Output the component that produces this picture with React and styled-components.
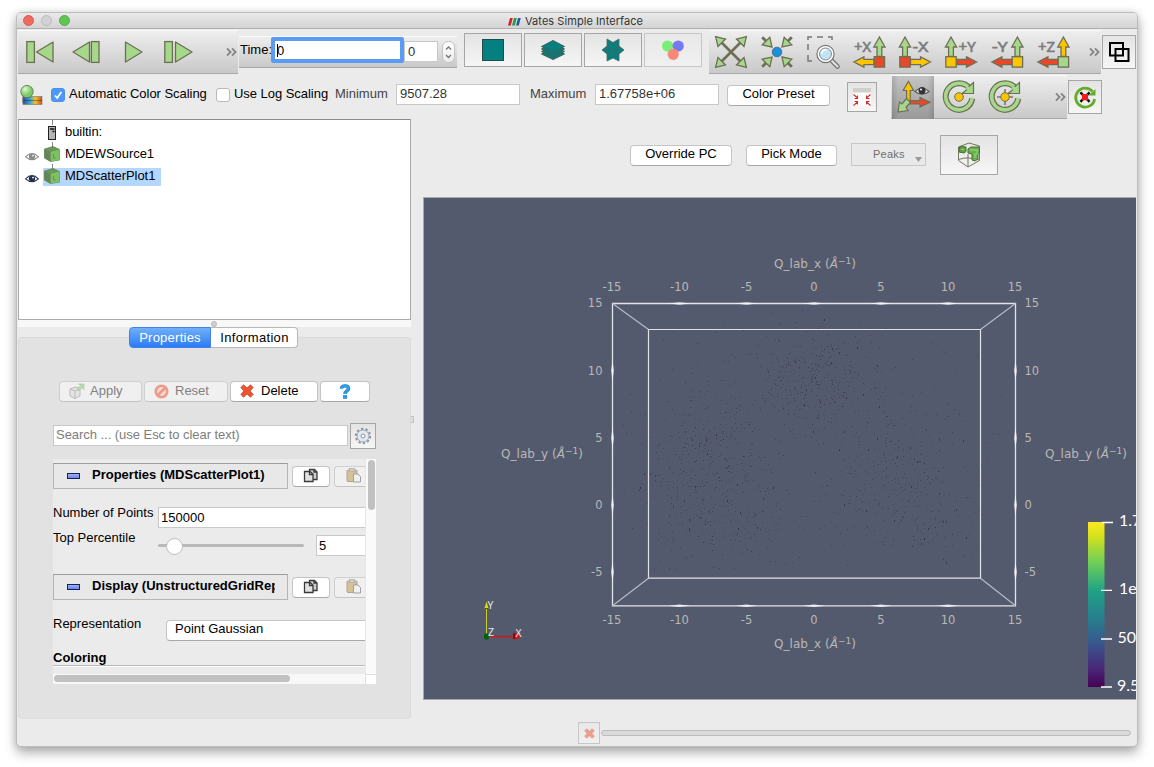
import React from 'react';
import styled, { createGlobalStyle, css } from 'styled-components';

const Global = createGlobalStyle`
  * { box-sizing: border-box; }
  html, body { margin: 0; background: #fff; overflow: hidden; }
  body { font: 13px/16px "Liberation Sans", Arial, sans-serif; color: #000; }
  svg { display: block; overflow: visible; flex: none; }
`;

/* ---------- window ---------- */
const Page = styled.div`
  width: 1154px; height: 767px; padding: 12px 16px; overflow: hidden;
`;
const Window = styled.div`
  width: 1122px; height: 735px; display: flex; flex-direction: column;
  border: 1px solid #bdbdbd; border-radius: 5px; background: #ebebeb; overflow: hidden;
  box-shadow: 0 6px 12px rgba(0,0,0,.3), 0 0 9px rgba(0,0,0,.12);
`;
const TitleBar = styled.header`
  flex: none; height: 16px; display: flex; align-items: center; position: relative;
  background: linear-gradient(#eaeaea, #d3d3d3); border-bottom: 1px solid #b0b0b0;
  padding-left: 6px; gap: 7px;
`;
const Light = styled.span`
  width: 11px; height: 11px; border-radius: 50%;
  background: ${p => p.$c}; border: 1px solid ${p => p.$b};
`;
const Title = styled.div`
  flex: 1; display: flex; gap: 5px; align-items: center; padding: 1px 0 0 431px;
  font: 11px/15px Inter, sans-serif; color: #333; white-space: nowrap; letter-spacing: .06px;
`;

/* ---------- tool rows ---------- */
const ToolRow = styled.div`
  flex: none; display: flex; align-items: flex-start; height: ${p => p.$h}px; padding-left: 1px;
`;
const spaced = css`
  flex: none; margin-left: ${p => p.$ml || 0}px; margin-top: ${p => p.$mt || 0}px;
`;
const ToolBar = styled.div`
  ${spaced}
  width: ${p => p.$w}px; height: ${p => p.$h || 44}px; display: flex; align-items: ${p => p.$align || 'center'};
  gap: ${p => p.$gap || 0}px; padding-left: ${p => p.$pl || 0}px;
  background: linear-gradient(#eeeeee, #c9c9c9); border-top: 1px solid #fafafa; border-bottom: 1px solid #a9a9a9;
`;
const Slot = styled.span`margin-left: ${p => p.$ml || 0}px;`;
const More = styled.span`
  margin-left: auto; padding-right: 1px;
`;
const TimeInput = styled.div`
  ${spaced}
  width: 133px; height: 26px; border: 4px solid #5a9bf6; border-radius: 2px; background: #fff;
  padding: 0 2px; line-height: 17px; display: flex; align-items: center;
`;
const Caret = styled.i`width: 1px; height: 13px; background: #000; margin-right: -1px;`;
const Field = styled.div`
  ${spaced}
  width: ${p => p.$w}px; height: 21px; border: 1px solid #c8c8c8; background: #fff;
  padding: 0 ${p => p.$pad || 3}px; line-height: ${p => p.$lh || 17}px; color: ${p => p.$c || '#333'}; white-space: nowrap;
  letter-spacing: ${p => p.$ls || 0}px;
`;
const Stepper = styled.div`
  ${spaced}
  width: 13px; height: 22px; border-radius: 6px; border: 1px solid #c2c2c2; background: linear-gradient(#fff, #ececec);
`;
const SquareButton = styled.div`
  ${spaced}
  width: ${p => p.$w}px; height: ${p => p.$h}px; display: flex; align-items: center; justify-content: center;
  border: 1px solid ${p => (p.$off ? '#c6c6c6' : '#a6a6a6')};
  background: linear-gradient(${p => (p.$off ? '#e8e8e8, #f0f0f0' : '#e4e4e4, #f6f6f6')});
`;
const Check = styled.span`
  ${spaced}
  width: 14px; height: 14px; border-radius: 3px;
  border: 1px solid ${p => (p.$on ? '#4a8ff0' : '#b9b9b9')}; background: ${p => (p.$on ? '#4d97f8' : '#fff')};
`;
const Label = styled.span`
  ${spaced}
  width: ${p => p.$w}px; white-space: nowrap; color: ${p => p.$c || '#000'};
  letter-spacing: ${p => p.$ls || 0}px;
`;
const PushButton = styled.div`
  ${spaced}
  width: ${p => p.$w}px; height: 21px; display: flex; align-items: center; justify-content: ${p => p.$j || 'center'};
  padding: ${p => p.$pad || '0 0 3px'}; gap: ${p => p.$gap || 0}px; line-height: 16px; white-space: nowrap;
  border: 1px solid ${p => (p.$off ? '#cfcfcf' : '#c4c4c4')}; border-bottom-color: ${p => (p.$off ? '#c4c4c4' : '#a8a8a8')};
  border-radius: 4px; background: ${p => (p.$off ? '#f0f0f0' : '#fff')}; color: ${p => (p.$off ? '#808080' : '#000')};
`;
const ButtonText = styled.span`margin-top: -1px; letter-spacing: ${p => p.$ls || 0}px;`;
const Pressed = styled.div`
  width: 42px; height: 43px; display: flex; align-items: center; justify-content: center;
  background: linear-gradient(90deg, rgba(0,0,0,.12), transparent 15% 85%, rgba(0,0,0,.12)), linear-gradient(#c4c4c4, #999);
`;

/* ---------- left column ---------- */
const Body = styled.div`flex: none; height: 600px; display: flex;`;
const Left = styled.div`width: 394px; padding-left: 1px; display: flex; flex-direction: column;`;
const Tree = styled.div`
  flex: none; height: 201px; background: #fff; border: 1px solid #aaa; border-top-color: #8c8c8c;
`;
const TreeRow = styled.div`
  height: 22px; display: flex; align-items: flex-start; padding-left: 6px;
`;
const EyeCell = styled.span`width: 18px; height: 22px; padding-top: 10px;`;
const Node = styled.span`
  height: 22px; display: flex; padding: 0 6px 0 1px; gap: 5px; line-height: 23px; letter-spacing: -.05px;
`;
const SelectedNode = styled(Node)`
  height: 18px; margin-top: 4px; background: #b3d7ff; line-height: 15px;
  svg { margin-top: -4px; }
`;
const HSplit = styled.div`
  flex: none; height: 7px; background: #f8f8f8; display: flex; justify-content: center; padding-right: 2px;
`;
const Dot = styled.i`
  width: 6px; height: 6px; border-radius: 50%; background: #cfcfcf; border: 1px solid #b9b9b9; margin-top: 1px;
`;
const Tabs = styled.div`
  flex: none; display: flex; height: 21px; margin: 0 0 -11px 111px; position: relative; z-index: 1;
`;
const Tab = styled.div`
  width: ${p => p.$w}px; text-align: center; line-height: 19px; letter-spacing: ${p => p.$ls || 0}px;
  padding-left: ${p => p.$pl || 0}px;
  border: 1px solid ${p => (p.$on ? '#3f80ea' : '#b8b8b8')};
  border-radius: ${p => (p.$on ? '4px 0 0 4px' : '0 4px 4px 0')}; ${p => !p.$on && 'border-left: 0;'}
  color: ${p => (p.$on ? '#fff' : '#000')}; background: ${p => (p.$on ? 'linear-gradient(#6fb0f9, #2c7bf5)' : '#fff')};
`;
const Panel = styled.section`
  flex: none; height: 382px; border-radius: 4px; background: #e2e2e2; border: 1px solid #dadada; border-bottom-color: #dedede;
  padding: 43px 34px 0; display: flex; flex-direction: column;
`;
const Line = styled.div`display: flex; align-items: flex-start; flex: none; height: ${p => p.$h}px; padding-left: ${p => p.$pl || 0}px;`;
const ScrollArea = styled.div`
  width: 324px; height: 225px; display: grid; grid-template: 215px 10px / 312px 11px;
`;
const Content = styled.div`background: #ebebeb; overflow: hidden; padding-top: 4px; white-space: nowrap;`;
const VTrack = styled.div`background: #fafafa; border-left: 1px solid #e6e6e6; padding: 1px 2px;`;
const VThumb = styled.div`width: 7px; height: 50px; border-radius: 4px; background: #c1c1c1;`;
const HTrack = styled.div`background: #f8f8f8; padding: 1px 1px 2px;`;
const HThumb = styled.div`width: 236px; height: 7px; border-radius: 4px; background: #c1c1c1;`;
const Corner = styled.div`background: #fff; border: 1px solid #e0e0e0; border-width: 1px 0 0 1px;`;
const Section = styled.div`
  flex: none; width: 235px; height: 26px; border: 1px solid #b5b5b5; border-top-color: #9c9c9c; background: #e8e8e8;
  display: flex; padding: 0 12px 0 13px; font-weight: bold; line-height: 22px; align-items: flex-start;
`;
const SectionText = styled.span`overflow: hidden; width: 183px; flex: none;`;
const Minus = styled.i`
  flex: none; width: 13px; height: 6px; margin: 9px 12px 0 0; border: 1px solid #16205c; background: linear-gradient(#9db0f5, #6d87e6);
`;
const SliderTrack = styled.div`
  ${spaced} width: 146px; height: 3px; border-radius: 2px; background: #b9b9b9; padding-left: 8px;
`;
const Knob = styled.i`
  display: block; width: 17px; height: 17px; margin-top: -6px; border-radius: 50%; background: #fff; border: 1px solid #bcbcbc;
`;
const Rule = styled.div`height: 2px; border-top: 1px solid #b8b8b8; background: #fff;`;
const VSplit = styled.div`width: 12px; padding-top: 297px;`;
const Grip = styled.i`display: block; width: 3px; height: 7px; border: 1px solid #c2c2c2; border-left: 0; background: #ddd;`;

/* ---------- right column ---------- */
const Right = styled.div`flex: 1; min-width: 0;`;
const Actions = styled.div`height: 78px; display: flex; align-items: flex-start;`;
const Combo = styled.div`
  ${spaced} width: 75px; height: 23px; border: 1px solid #c8c8c8; background: #e9e9e9; color: #6f6f6f;
  font: 11px/21px "Liberation Sans", sans-serif; letter-spacing: .25px; padding: 0 3px 0 21px; display: flex; justify-content: space-between; align-items: center;
`;
const DropMark = styled.span`padding-top: 9px;`;
const View = styled.div`
  width: 713px; height: 503px; border: 1px solid #a9a9a9; border-right: 0; background: #545a6e; overflow: hidden;
`;
const Status = styled.footer`flex: none; display: flex; align-items: center; padding: 2px 0 0 561px; height: 26px;`;
const Progress = styled.div`
  width: 530px; height: 6px; margin-left: 1px; border: 1px solid #bdbdbd; border-radius: 3px; background: #dadada;
`;

/* ---------- icons ---------- */
const G = '#a6d88c', Y = '#fdc400', R = '#e8472a', S = '#6e6e55';
const Svg = ({ w, h, children, ...r }) => <svg width={w} height={h} viewBox={`0 0 ${w} ${h}`} {...r}>{children}</svg>;

const Chevrons = () => (
  <Svg w={11} h={8} fill="none" stroke="#858585" strokeWidth="1.8"><path d="M1 .4 4.6 4 1 7.6M6 .4 9.6 4 6 7.6" /></Svg>
);
const Play = ({ bar, tri, w = 28 }) => (
  <Svg w={w} h={24} fill={G} stroke={S} strokeWidth="1.3">
    {bar != null && <rect x={bar} y="1.6" width="7.6" height="20.8" />}
    <path d={tri} strokeLinejoin="round" />
  </Svg>
);
const Layers = () => (
  <Svg w={26} h={20} fill="#047f80" stroke="#3f5f58" strokeWidth="1">
    {[14, 11.5, 9, 6.5].map(y => <path key={y} d={`M13 ${y - 6} 24.5 ${y} 13 ${y + 5.5} 1.5 ${y}Z`} />)}
  </Svg>
);
const Star = () => (
  <Svg w={22} h={22} fill="#047f80" stroke="#4a6a62" strokeWidth=".8">
    <path d="M5 0 11 3.5 17 0 17 7 22 11 17 15 17 22 11 19 5 22 5 15 0 11 5 7Z" />
    <path d="M5 7 11 11 17 7M11 11V19M11 3.5 5 7 5 15 11 11 17 15V7Z" fill="none" />
  </Svg>
);
const Rgb = () => (
  <Svg w={22} h={20}><circle cx="5.6" cy="6" r="5.6" fill="#78f078" /><circle cx="16.2" cy="6" r="5.6" fill="#7878f0" /><circle cx="11.2" cy="14.3" r="5.6" fill="#f88878" /></Svg>
);
const ResetView = () => (
  <Svg w={34} h={34} stroke={S} strokeWidth="1.3" fill={G}>
    <path d="M6 6 28 28M28 6 6 28" strokeWidth="2.6" />
    {[0, 90, 180, 270].map(a => <path key={a} transform={`rotate(${a} 17 17)`} d="M1.6 1.6 11.5 4 4 11.5Z" />)}
  </Svg>
);
const ZoomData = () => (
  <Svg w={34} h={34} stroke={S} strokeWidth="1.3" fill={G}>
    {[0, 90, 180, 270].map(a => (
      <g key={a} transform={`rotate(${a} 17 17)`}><path d="M2.2 2.2 6 6" strokeWidth="2.8" /><path d="M12 12 2.2 9.8 9.8 2.2Z" /></g>
    ))}
    <circle cx="17" cy="17" r="4.8" fill="#1b8fdc" stroke="#47667a" strokeWidth=".8" />
  </Svg>
);
const ZoomBox = () => (
  <Svg w={34} h={34} fill="none">
    <path d="M2 5V2H6M11 2H17M22 2H26V5M2 9V15M2 20V26H6" stroke="#777" strokeWidth="1.5" />
    <path d="M25 25 31.5 31.5" stroke="#777" strokeWidth="4.6" strokeLinecap="round" /><path d="M25 25 31.5 31.5" stroke="#ddd" strokeWidth="2.2" strokeLinecap="round" />
    <circle cx="19.5" cy="19" r="8.6" fill="#fff" stroke="#777" strokeWidth="1.2" /><circle cx="19.5" cy="19" r="6" fill="#bfe3f7" stroke="#888" />
    <path d="M15.5 19a4 4 0 0 1 5-4" stroke="#fff" strokeWidth="1.8" />
  </Svg>
);
const AxisIcon = ({ text, left, up, box, side }) => {
  const shapes = (
    <g fill={G} stroke={S} strokeWidth="1.3">
      <path fill={up} d="M4.6 21.5V12H1.4L7 2 12.6 12H9.4V21.5Z" />
      <path fill={side} d="M12.5 24.4H22.5V21.8L32.5 27 22.5 32.2V29.6H12.5Z" />
      <rect fill={box} x="1.8" y="21.7" width="10.4" height="10.4" />
    </g>
  );
  return (
    <Svg w={34} h={34}>
      <g transform={left ? 'translate(34.4 0) scale(-1 1)' : undefined}>{shapes}</g>
      <text x={left ? 2 : 14.6} y="16.6" textLength={text[0] === '+' ? 17 : 15.5} lengthAdjust="spacingAndGlyphs" fill="#7d7d7d" stroke="#7d7d7d" strokeWidth=".7" fontFamily="Open Sans, sans-serif" fontSize="15">{text}</text>
    </Svg>
  );
};
const AxesEye = () => (
  <Svg w={36} h={34}>
    <g stroke={S} strokeWidth="1.2">
      <path fill={R} d="M12 20.6H25V17.5L35 22.3 25 27V24H12Z" /><path fill={Y} d="M11.6 21V10.5H8.2L13.4 1.5 18.6 10.5H15.2V21Z" />
      <path fill={G} d="M11.5 18.5 15.5 22.5 11 27 13 30.5 3 32 4.5 22 7 24Z" />
    </g>
    <path d="M20 11.5Q27 4.5 34 11.5 27 17 20 11.5Z" fill="#e9e9e9" stroke="#555" strokeWidth="1.1" /><circle cx="27" cy="10.6" r="3.6" fill="#333" /><circle cx="26" cy="9.4" r="1" fill="#fff" />
  </Svg>
);
const RotateIcon = ({ cross }) => (
  <Svg w={34} h={34} fill="none">
    <path d="M27.6 8.4A13.3 13.3 0 1 0 30.2 18.5" stroke={S} strokeWidth="6" />
    <path d="M27.2 8A13.3 13.3 0 1 0 30.2 17.7" stroke={G} strokeWidth="3.6" />
    <path d="M31.5 2.5V13.5H20L24.5 10 27.5 6Z" fill={G} stroke={S} strokeWidth="1.2" /><path d="M23.7 7.8 27.5 8.5 26 11" stroke={G} strokeWidth="3" />
    {cross && <path d="M17 9V25M9 17H25" stroke="#777" strokeWidth="1.6" />}
    <circle cx="17" cy="17" r="4.3" fill={Y} stroke={S} />
  </Svg>
);
const Shrink = () => (
  <Svg w={20} h={19}>
    <rect width="18" height="18" x="1" fill="#fff" /><rect width="18" height="4.5" x="1" fill="#cfcfcf" />
    <g stroke="#cf2f28" strokeWidth="1.1" fill="none"><path d="M1.5 6.5 5.5 10M5.5 7.5V10.5H2.5M18.5 6.5 14.5 10M14.5 7.5V10.5H17.5M1.5 17.5 5.5 14M2.5 13.5H5.5V16.5M18.5 17.5 14.5 14M17.5 13.5H14.5V16.5" /></g>
  </Svg>
);
const Overlap = () => (
  <Svg w={22} h={22} fill="none" stroke="#000" strokeWidth="2"><rect x="2" y="2" width="13" height="12.5" /><rect x="7.5" y="8" width="13" height="12" /></Svg>
);
const AutoReset = () => (
  <Svg w={22} h={22} fill="none">
    <path d="M18.5 5.5A9.5 9.5 0 1 0 20.6 13" stroke="#64ad2a" strokeWidth="2.8" /><path d="M21.5 3V9.5H14.5Z" fill="#64ad2a" />
    <path d="M6.4 6.4 15.6 15.8M15.6 6.4 6.4 15.8" stroke="#111" strokeWidth="2.4" /><rect x="8" y="8" width="6" height="6.2" fill="#ee1c1c" />
  </Svg>
);
const ColorMap = () => (
  <Svg w={23} h={20}>
    <defs><linearGradient id="cm"><stop stopColor="#4b3fa8" /><stop offset=".35" stopColor="#2aa5d8" /><stop offset=".65" stopColor="#f4c030" /><stop offset="1" stopColor="#c95020" /></linearGradient>
      <radialGradient id="ball" cx=".35" cy=".3"><stop stopColor="#dff7d4" /><stop offset="1" stopColor="#7cc865" /></radialGradient></defs>
    <path d="M3 12V18H8" fill="none" stroke="#555" /><rect x="3" y="11.5" width="19" height="8" fill="url(#cm)" stroke="#776" strokeWidth=".6" /><path d="M3 15.5H22" stroke="#0005" />
    <circle cx="7" cy="6.6" r="6.2" fill="url(#ball)" stroke="#55704c" strokeWidth=".8" />
  </Svg>
);
const Server = () => (
  <Svg w={16} h={22}><path d="M8.5 0V5" stroke="#888" /><rect x="4.5" y="6.5" width="7" height="13" fill="#b5b5b5" stroke="#222" /><path d="M6 9H10.5M8.5 11.5H10.5" stroke="#111" strokeWidth="1.3" /></Svg>
);
const Cube = () => (
  <Svg w={16} h={22}><path d="M8.5 0V5" stroke="#888" /><path d="M.5 7 9 4.5 15.5 7.5V18L6.5 19.5 .5 16Z" fill="#68985a" stroke="#587a4a" strokeWidth=".7" /><path d="M6.5 10 15.5 7.5V18L6.5 19.5Z" fill="#7fc065" /><path d="M.5 7 6.5 10V19.5L.5 16Z" fill="#66855a" /><path d="M9.5 12V16H12" stroke="#5b9048" fill="none" strokeWidth=".8" /></Svg>
);
const Eye = ({ c }) => (
  <Svg w={14} h={9}><path d="M.6 4.8Q7-1.8 13.4 4.8 7 10.5.6 4.8Z" fill="#fff" stroke={c} strokeWidth="1.1" /><circle cx="7" cy="4.6" r="3.2" fill={c} /><circle cx="8" cy="3.6" r=".9" fill="#fff" /></Svg>
);
const CrossMark = ({ s = 14, o = 1 }) => (
  <svg width={s} height={s} viewBox="0 0 14 14" opacity={o}><path d="M3.5.8 7 4 10.5.8 13.2 3.5 10.2 7 13.2 10.5 10.5 13.2 7 10 3.5 13.2.8 10.5 3.8 7 .8 3.5Z" fill="#f0532d" stroke="#b8452c" strokeWidth=".7" /></svg>
);
const ApplyIcon = () => (
  <Svg w={16} h={16} opacity=".6"><path d="M1 6 7 4 11 6V13L6 15.5 1 13Z" fill="#ddd" stroke="#999" /><path d="M1 6 6 8 11 6M6 8V15" fill="none" stroke="#999" /><path d="M8 6 12 2 9.5 1H15V7L13.5 4.5 9.5 8Z" fill="#8fce7c" stroke="#84a578" strokeWidth=".6" /></Svg>
);
const Forbid = () => (
  <Svg w={15} h={15} opacity=".65"><circle cx="7.5" cy="7.5" r="7" fill="#ef6b52" /><circle cx="7.5" cy="7.5" r="4.4" fill="#f6d0c8" /><path d="M4 11 11 4" stroke="#ef6b52" strokeWidth="2.6" /></Svg>
);
const Help = () => (
  <Svg w={12} h={15} fill="none"><path d="M2.5 4.5C2.5 1 9.5 1 9.5 4.6 9.5 7 6 7 6 10" stroke="#2377b5" strokeWidth="3.4" /><path d="M2.5 4.5C2.5 1 9.5 1 9.5 4.6 9.5 7 6 7 6 10" stroke="#2ba0e8" strokeWidth="2.4" /><rect x="4.4" y="11.4" width="3.4" height="3" fill="#2ba0e8" stroke="#2377b5" strokeWidth=".6" /></Svg>
);
const Gear = () => (
  <Svg w={18} h={18} fill="none" stroke="#8b98a2"><circle cx="9" cy="9" r="7.2" strokeWidth="2" strokeDasharray="2.4 2.12" /><circle cx="9" cy="9" r="6" fill="#e3eaef" strokeWidth=".8" /><circle cx="9" cy="9" r="2" fill="#fff" /></Svg>
);
const Copy = () => (
  <Svg w={16} h={15} fill="#cfcfcf" stroke="#3a3a3a" strokeWidth="1.3"><path d="M6.5 1.5H11.5L14 4V11.5H6.5Z" /><path d="M1.5 3.5H7L10 6.3V13.5H1.5Z" fill="#e2e2e2" /><path d="M6.5 3.5V6.5H10M11 1.5V4H14" fill="none" /></Svg>
);
const Paste = () => (
  <Svg w={16} h={15} opacity=".65"><rect x="1" y="2" width="10" height="11.5" rx="1" fill="#c9a869" stroke="#8a7a5c" /><rect x="3.5" y=".6" width="5" height="2.8" fill="#bbb" stroke="#888" strokeWidth=".7" /><path d="M7.5 6H12L14.5 8.5V14H7.5Z" fill="#f1f1f1" stroke="#777" /></Svg>
);
const Splatter = () => (
  <Svg w={24} h={26} fill="none" stroke="#77745f">
    <path d="M1.5 5 12 1 22.5 4V18.5L11 25 1.5 18.5ZM11 12V25M1.5 17.5Q11 14 22 18" />
    <path d="M2 5.5 4 4.5 9 5V9.5L7 11 2 10Z" fill="#60a344" stroke="#456f38" /><path d="M4.5 7.5H7" stroke="#9bd47f" />
    <path d="M11 7 14 5 22.5 5V10L21 12V17L18 19 15 18V12L11 11Z" fill="#6ab04c" stroke="#456f38" /><path d="M13 8H20V12H18V16" stroke="#8ccc6c" strokeWidth="1.4" />
  </Svg>
);

/* ---------- 3D view ---------- */
function makePoints() {
  let s = 90210;
  const rnd = () => ((s = (s * 1664525 + 1013904223) % 4294967296) / 4294967296);
  const g = () => rnd() + rnd() + rnd() - 1.5;
  const clusters = [
    [815, 378, 62, 45, 330], [715, 435, 60, 60, 190], [712, 495, 72, 60, 280], [900, 475, 72, 65, 270],
    [800, 420, 190, 115, 240], [925, 525, 90, 40, 80], [740, 535, 90, 30, 70],
  ];
  const out = [];
  clusters.forEach(([x, y, sx, sy, n]) => {
    for (let i = 0; i < n; i++) {
      const px = Math.round(x + g() * sx), py = Math.round(y + g() * sy);
      const o = rnd();
      if (px > 617 && px < 1010 && py > 308 && py < 572) out.push([px, py, o > .94 ? .65 : .22 + o * .35, o > .96 ? 2 : 1]);
    }
  });
  return out;
}
const POINTS = makePoints();
const XT = [[-15, 612], [-10, 679.5], [-5, 746.5], [0, 814], [5, 881], [10, 948], [15, 1015]];
const YT = [[15, 303], [10, 370.5], [5, 438], [0, 505], [-5, 572]];
const AxisTitle = ({ x, y, n }) => (
  <text x={x} y={y} textLength="82">Q_lab_{n} (<tspan fontStyle="italic">Å</tspan><tspan dy="-4.5" fontSize="9">−1</tspan><tspan dy="4.5">)</tspan></text>
);
const Scene = () => (
  <svg width="712" height="501" viewBox="424 198 712 501">
    <defs>
      <linearGradient id="vir" x2="0" y2="1">
        <stop stopColor="#fde725" /><stop offset=".08" stopColor="#d8e219" /><stop offset=".25" stopColor="#6ccd5a" /><stop offset=".42" stopColor="#1fa187" /><stop offset=".58" stopColor="#277f8e" /><stop offset=".75" stopColor="#3b528b" /><stop offset=".9" stopColor="#482475" /><stop offset="1" stopColor="#440154" />
      </linearGradient>
    </defs>
    {POINTS.map(([x, y, o, r], i) => <rect key={i} x={x} y={y} width={1} height={r} fill="#33203f" opacity={o} />)}
    <g fill="none" stroke="#e2e3ea" strokeWidth="1.2">
      <path d="M612.5 303.5H1015.5V605.8H612.5Z" strokeWidth="1.3" /><path d="M648.5 329.5H980.5V578.2H648.5Z" />
      <path d="M612.5 303.5 648.5 329.5M1015.5 303.5 980.5 329.5M612.5 605.8 648.5 578.2M1015.5 605.8 980.5 578.2" stroke="#b6b9c6" />
    </g>
    <g fill="#f6f6fa" opacity=".85">
      {XT.slice(1, 6).map(([v, x]) => [303.5, 605.8].map(y => <path key={v + '-' + y} d={`M${x - 11} ${y}L${x} ${y - 1.3} ${x + 11} ${y} ${x} ${y + 1.3}Z`} />))}
      {YT.slice(1).map(([v, y]) => [612.5, 1015.5].map(x => <path key={v + '-' + x} d={`M${x} ${y - 11}L${x + 1.3} ${y} ${x} ${y + 11} ${x - 1.3} ${y}Z`} />))}
    </g>
    <g fill="#b9b8b4" fontFamily="DejaVu Sans, sans-serif" fontSize="11.5">
      {XT.map(([v, x]) => [291, 624].map(y => <text key={v + '-' + y} x={x} y={y} textAnchor="middle">{v}</text>))}
      {YT.map(([v, y]) => <text key={v} x="602.5" y={y + 4} textAnchor="end">{v}</text>)}
      {YT.map(([v, y]) => <text key={v} x="1024.5" y={y + 4}>{v}</text>)}
      <g fontSize="12">
        <AxisTitle x={774} y={268} n="x" /><AxisTitle x={774} y={648} n="x" />
        <AxisTitle x={501} y={458} n="y" /><AxisTitle x={1045} y={458} n="y" />
      </g>
    </g>
    <path d="M486.5 636V608" stroke="#cccc22" /><path d="M484.3 609 486.5 601.5 488.7 609Z" fill="#e0e000" /><path d="M484.5 608.5H488.5" stroke="#550" />
    <path d="M489 636.5H519" stroke="#e01010" strokeWidth="1.4" /><path d="M514 632.5 522 636.3 514 640Z" fill="#e01010" /><path d="M514 633V639" stroke="#300" />
    <ellipse cx="486.5" cy="636.5" rx="2.5" ry="3.2" fill="#006400" />
    <g fill="#eee" fontFamily="Open Sans, sans-serif" fontSize="10.5"><text x="487.5" y="608.5">Y</text><text x="488" y="636">Z</text><text x="515.5" y="636.5">X</text></g>
    <rect x="1088" y="522" width="16.5" height="165" fill="url(#vir)" />
    <path d="M1102 522.5H1113M1101 590.3H1112M1101 639H1112M1101 687H1112" stroke="#fff" strokeWidth="1.3" />
    <g fill="#fff" fontFamily="Lato, sans-serif" fontSize="16" fontWeight="400"><text x="1119" y="526">1.7</text><text x="1119" y="594">1e</text><text x="1117.5" y="643">50</text><text x="1117" y="691">9.5</text></g>
  </svg>
);

export default function App() {
  return (
    <Page>
      <Global />
      <Window>
        <TitleBar>
          <Light $c="#ee6a5e" $b="#dc5b50" /><Light $c="#d2d2d2" $b="#bcbcbc" /><Light $c="#61c554" $b="#4fb142" />
          <Title>
            <Svg w={12} h={9}><path d="M2 1H4.8L2.8 8.5H0Z" fill="#d0232b" /><path d="M6 1H8.8L6.8 8.5H4Z" fill="#2b9a44" /><path d="M10 1H12.8L10.8 8.5H8Z" fill="#1f5faa" /></Svg>
            Vates Simple Interface
          </Title>
        </TitleBar>

        <ToolRow $h={46}>
          <ToolBar $w={220} $mt={1} $pl={8}>
            <Slot><Play bar={0.8} tri="M27 2V22L10.5 12Z" /></Slot>
            <Slot $ml={18}><Play bar={19.4} tri="M17.5 2V22L1 12Z" /></Slot>
            <Slot $ml={24}><Play tri="M1.5 2V22L18 12Z" w={20} /></Slot>
            <Slot $ml={20}><Play bar={0.8} tri="M11.5 2V22L28 12Z" /></Slot>
            <More><Chevrons /></More>
          </ToolBar>
          <ToolBar $w={218} $h={32} $ml={1} $mt={7} $align="flex-start">
            <Label $ml={1} $mt={5} $w={31}>Time:</Label>
            <TimeInput><Caret />0</TimeInput>
            <Field $w={34} $mt={4} $lh={19}>0</Field>
            <Stepper $ml={4} $mt={4}><Svg w={11} h={20} fill="none" stroke="#777" strokeWidth="1.4"><path d="M3 7.5 5.5 5 8 7.5M3 13 5.5 15.5 8 13" /></Svg></Stepper>
          </ToolBar>
          <SquareButton $w={58} $h={34} $ml={7} $mt={4}><Svg w={22} h={22}><rect x=".5" y=".5" width="21" height="21" fill="#058080" stroke="#1f4d4a" /></Svg></SquareButton>
          <SquareButton $w={58} $h={34} $ml={2} $mt={4}><Layers /></SquareButton>
          <SquareButton $w={58} $h={34} $ml={2} $mt={4}><Star /></SquareButton>
          <SquareButton $w={58} $h={34} $ml={2} $mt={4} $off><Rgb /></SquareButton>
          <ToolBar $w={392} $ml={7} $mt={1} $pl={5} $gap={12}>
            <ResetView /><ZoomData /><ZoomBox />
            <AxisIcon text="+X" left up={G} box={R} side={Y} />
            <AxisIcon text="-X" up={G} box={R} side={Y} />
            <AxisIcon text="+Y" up={G} box={Y} side={R} />
            <AxisIcon text="-Y" left up={G} box={Y} side={R} />
            <AxisIcon text="+Z" left up={Y} box={G} side={R} />
            <More><Chevrons /></More>
          </ToolBar>
          <SquareButton $w={34} $h={34} $ml={1} $mt={6}><Overlap /></SquareButton>
        </ToolRow>

        <ToolRow $h={44}>
          <Label as="div" $ml={2} $mt={10} $w={31}><ColorMap /></Label>
          <Check $mt={13} $on><Svg w={12} h={12} fill="none" stroke="#fff" strokeWidth="1.8"><path d="M3 6.5 5.2 9 9.3 3" /></Svg></Check>
          <Label $ml={4} $mt={11} $w={147} $ls={-0.04}>Automatic Color Scaling</Label>
          <Check $mt={13} />
          <Label $ml={4} $mt={11} $w={101} $ls={-0.04}>Use Log Scaling</Label>
          <Label $mt={11} $w={61} $c="#444">Minimum</Label>
          <Field $w={124} $mt={9}>9507.28</Field>
          <Label $ml={10} $mt={11} $w={65} $c="#444">Maximum</Label>
          <Field $w={124} $mt={9}>1.67758e+06</Field>
          <PushButton $w={103} $ml={8} $mt={10}>Color Preset</PushButton>
          <SquareButton $w={30} $h={30} $ml={17} $mt={7}><Shrink /></SquareButton>
          <ToolBar $w={176} $ml={14} $pl={1}>
            <Pressed><AxesEye /></Pressed>
            <Slot $ml={8}><RotateIcon /></Slot>
            <Slot $ml={12}><RotateIcon cross /></Slot>
            <More><Chevrons /></More>
          </ToolBar>
          <SquareButton $w={34} $h={34} $ml={1} $mt={5}><AutoReset /></SquareButton>
        </ToolRow>

        <Body>
          <Left>
            <Tree>
              <TreeRow><EyeCell /><Node><Server />builtin:</Node></TreeRow>
              <TreeRow><EyeCell><Eye c="#8b8b8b" /></EyeCell><Node><Cube />MDEWSource1</Node></TreeRow>
              <TreeRow><EyeCell><Eye c="#26304e" /></EyeCell><SelectedNode><Cube />MDScatterPlot1</SelectedNode></TreeRow>
            </Tree>
            <HSplit><Dot /></HSplit>
            <Tabs><Tab $on $w={82} $ls={0.25}>Properties</Tab><Tab $w={87} $ls={0.3} $pl={1}>Information</Tab></Tabs>
            <Panel>
              <Line $h={44} $pl={6}>
                <PushButton $off $w={83} $j="flex-start" $pad="0 0 1px 9px" $gap={5}><ApplyIcon /><ButtonText>Apply</ButtonText></PushButton>
                <PushButton $off $w={84} $ml={2} $j="flex-start" $pad="0 0 1px 9px" $gap={6}><Forbid /><ButtonText>Reset</ButtonText></PushButton>
                <PushButton $w={88} $ml={2} $j="flex-start" $pad="0 0 1px 9px" $gap={7}><CrossMark /><ButtonText>Delete</ButtonText></PushButton>
                <PushButton $w={50} $ml={2} $pad="0 1px 1px 0"><Help /></PushButton>
              </Line>
              <Line $h={34}>
                <Field $w={295} $c="#7d7d7d" $ls={-0.04} $pad={2}>Search ... (use Esc to clear text)</Field>
                <SquareButton $w={26} $h={26} $ml={2} $mt={-2}><Gear /></SquareButton>
              </Line>
              <ScrollArea>
                <Content>
                  <Line $h={44}>
                    <Section><Minus /><SectionText>Properties (MDScatterPlot1)</SectionText></Section>
                    <PushButton $w={38} $ml={4} $mt={3}><Copy /></PushButton>
                    <PushButton $w={40} $ml={4} $mt={3} $off><Paste /></PushButton>
                  </Line>
                  <Line $h={28}>
                    <Label $w={105} $mt={-2}>Number of Points</Label>
                    <Field $w={210} $c="#000" $lh={19} $pad={2}>150000</Field>
                  </Line>
                  <Line $h={39}>
                    <Label $w={105} $mt={-5}>Top Percentile</Label>
                    <SliderTrack $mt={9}><Knob /></SliderTrack>
                    <Field $w={60} $ml={12} $c="#000" $lh={19} $pad={2}>5</Field>
                  </Line>
                  <Line $h={46}>
                    <Section><Minus /><SectionText>Display (UnstructuredGridRepresentation)</SectionText></Section>
                    <PushButton $w={38} $ml={4} $mt={3}><Copy /></PushButton>
                    <PushButton $w={40} $ml={4} $mt={3} $off><Paste /></PushButton>
                  </Line>
                  <Line $h={30}>
                    <Label $w={113} $mt={-4}>Representation</Label>
                    <PushButton $w={220} $j="flex-start" $pad="0 0 3px 8px">Point Gaussian</PushButton>
                  </Line>
                  <Line $h={15}><b>Coloring</b></Line>
                  <Rule />
                </Content>
                <VTrack><VThumb /></VTrack>
                <HTrack><HThumb /></HTrack>
                <Corner />
              </ScrollArea>
            </Panel>
          </Left>
          <VSplit><Grip /></VSplit>
          <Right>
            <Actions>
              <PushButton $w={102} $ml={207} $mt={26}>Override PC</PushButton>
              <PushButton $w={91} $ml={14} $mt={26}>Pick Mode</PushButton>
              <Combo $ml={14} $mt={24}>Peaks<DropMark><Svg w={7} h={5}><path d="M0 0H7L3.5 5Z" fill="#999" /></Svg></DropMark></Combo>
              <SquareButton $w={58} $h={40} $ml={14} $mt={16}><Splatter /></SquareButton>
            </Actions>
            <View><Scene /></View>
          </Right>
        </Body>

        <Status>
          <SquareButton $w={22} $h={22} $off><CrossMark s={11} o={0.5} /></SquareButton>
          <Progress />
        </Status>
      </Window>
    </Page>
  );
}
